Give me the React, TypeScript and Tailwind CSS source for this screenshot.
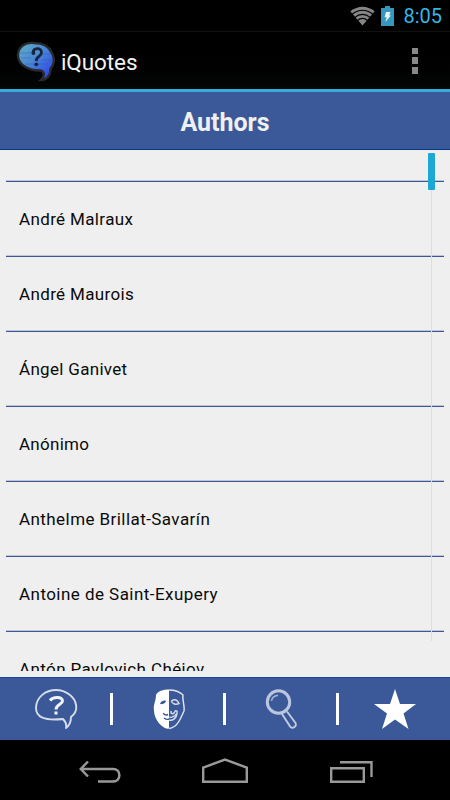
const authors = [
  { name: "André Malraux", tracking: "tracking-[0.36px]" },
  { name: "André Maurois", tracking: "tracking-[0.36px]" },
  { name: "Ángel Ganivet", tracking: "tracking-[0.31px]" },
  { name: "Anónimo", tracking: "tracking-[0.27px]" },
  { name: "Anthelme Brillat-Savarín", tracking: "tracking-[0.43px]" },
  { name: "Antoine de Saint-Exupery", tracking: "tracking-[0.45px]" },
  { name: "Antón Pavlovich Chéjov", tracking: "tracking-[0.39px]" },
];

const StatusBar = () => (
  <div className="flex h-[31px] w-full items-center justify-end bg-black pr-2">
    <svg className="mr-[6px] h-[20px] w-[25px]" viewBox="0 0 25 20">
      <path d="M0.3 5.3Q12.5-3.8 24.7 5.3L12.5 19.6Z" fill="#858585" />
      <g fill="none" stroke="#000" strokeWidth="1.2">
        <path d="M2 8.3Q12.5 0.2 23 8.3" />
        <path d="M4.5 11.6Q12.5 5 20.5 11.6" />
        <path d="M7.3 14.6Q12.5 10.2 17.7 14.6" />
      </g>
    </svg>
    <svg className="mr-[9px] h-[20px] w-[13px]" viewBox="0 0 13 20">
      <path d="M0 2H4V0H9V2H13V20H0Z" fill="#3597bd" />
      <path d="M5 6H9.5L8.2 9.5H10L4.3 16L5.7 11.2H3.6Z" fill="#e8f6fc" />
    </svg>
    <p className="pt-[2px] text-[20px] leading-[29px] text-[#33b5e5]">8:05</p>
  </div>
);

const ActionBar = () => (
  <div className="flex h-[58px] w-full items-center border-t border-[#111] bg-gradient-to-b from-black to-[#040605] pl-4 pr-8">
    <svg className="mr-[6px] mt-[2px] h-[42px] w-[39px]" viewBox="0 0 39 42">
      <defs>
        <linearGradient id="bubble" x1="0" y1="0" x2="0.9" y2="1">
          <stop offset="0" stopColor="#60b1c6" />
          <stop offset="0.45" stopColor="#4b88d2" />
          <stop offset="0.8" stopColor="#3658e4" />
          <stop offset="1" stopColor="#2440d0" />
        </linearGradient>
      </defs>
      <path
        d="M18 2C8 1 1.6 7 2 15C2.4 24 13 30 25 29.5C29 31 28.5 36 25 39C31 39 35 34 34.5 28C38 24 39 18 36 12C33 5 26 2 18 2Z"
        fill="url(#bubble)"
        stroke="#292a2c"
        strokeWidth="2.4"
      />
      <g stroke="#24479f" strokeWidth="0.6" opacity="0.5">
        <path d="M4 12H15M5 17H15M24 13H35M26 19H35M9 23H32" />
      </g>
      <path
        d="M17 12C17.2 6.5 25.5 6 25.5 11.5C25.5 15.5 20 15.5 20.3 20"
        fill="none"
        stroke="#17263d"
        strokeWidth="2.8"
      />
      <circle cx="17.4" cy="12" r="1.9" fill="#17263d" />
      <circle cx="20.3" cy="23.3" r="1.9" fill="#17263d" />
    </svg>
    <p className="flex-1 pt-[4px] text-[22.5px] leading-none tracking-[-0.1px] text-[#f3f3f3]">iQuotes</p>
    <div className="flex flex-col gap-[3px] pt-px">
      <div className="h-[6px] w-[6px] bg-[#888]" />
      <div className="h-[7px] w-[6px] bg-[#888]" />
      <div className="h-[7px] w-[6px] bg-[#888]" />
    </div>
  </div>
);

const AuthorList = () => (
  <div className="relative h-[527px] w-full bg-[#efefef]">
    <div className="h-[521px] overflow-hidden pl-[6px] pr-[6px]">
      <div className="h-[30px]" />
      {authors.map((author) => (
        <div
          key={author.name}
          className="h-[75px] border-t border-[#c0c4d2]"
        >
          <div className="flex h-[74px] items-center border-t border-[#3b5998] pl-[13px]">
            <p className={`text-[17px] leading-[20px] text-[#0a0a0a] ${author.tracking}`}>
              {author.name}
            </p>
          </div>
        </div>
      ))}
    </div>
    {/* scroll track and thumb */}
    <div className="absolute right-[18px] top-[3px] h-[488px] w-px bg-[#dedede]" />
    <div className="absolute right-[15px] top-[3px] h-[37px] w-[7px] rounded-[1px] bg-[#1ca8d5]" />
  </div>
);

const TabBar = () => (
  <div className="flex h-[63px] w-full items-center border-t border-[#16459b] bg-[#3b5998]">
    <div className="flex w-[110px] justify-end pr-[32px]">
      <svg className="h-[42px] w-[44px]" viewBox="0 0 44 42" fill="none">
        <path
          d="M22 2C12 2 2 9 2 20C2 29 10 33 29 31C31 33 33 36 32 40C36 37 37 33 37 29C41 26 43 22 42 17C41 9 32 2 22 2Z"
          stroke="#d5dced"
          strokeWidth="1.9"
          strokeLinejoin="round"
        />
        <path
          d="M16 12.5C19 8.5 29 8.5 28.5 13C28.5 16.5 22 16 22 21.5M22 23.5V26.5"
          stroke="#f0f3fa"
          strokeWidth="3"
        />
      </svg>
    </div>
    <div className="h-[32px] w-[3px] bg-white" />
    <div className="flex w-[110px] justify-center pl-px">
      <svg className="h-[42px] w-[34px]" viewBox="0 0 34 42" fill="none">
        <path
          d="M17 1.5C11 1.5 6 3 4 7C4 13 1 17 2 22C2 28 5 34 10 38C12 40 15 41 17 40.5Z"
          fill="#fff"
        />
        <path
          d="M17 2C23 2 28 4 31 7C30 12 33 18 32 23C29 29 28 34 23 38C20 40 18 40.5 17 40.5"
          stroke="#e0e5f1"
          strokeWidth="1.4"
        />
        <path d="M8 16C9 12.5 13 12 14 13C13 16 10 16.5 8 16Z" fill="#3b5998" />
        <path
          d="M19.5 13C23 10.5 25.5 12 27 15.5C24 17 20 16 19.5 13ZM19 23C18.5 27 22 26 23 23.5C23.5 22 26 23 25 25C24.5 31 20 33 17 32"
          stroke="#d6ddec"
          strokeWidth="1.5"
        />
        <path
          d="M12 30C14 31.5 16 31.5 17 31M16 26.5C14 27.5 12 27 11.5 25"
          stroke="#3b5998"
          strokeWidth="1.4"
        />
        <path d="M17 29C20 30 23 28 24 26" stroke="#d6ddec" strokeWidth="1.2" />
      </svg>
    </div>
    <div className="h-[32px] w-[3px] bg-white" />
    <div className="flex w-[110px] justify-center">
      <svg className="h-[40px] w-[34px]" viewBox="0 0 34 40" fill="none">
        <circle cx="14.5" cy="13" r="11.2" stroke="#bcc7df" strokeWidth="3" />
        <path d="M7.5 12C7.8 9 10 6.8 14 6.2" stroke="#a7b5d4" strokeWidth="1.4" />
        <path
          d="M18 25L26.5 38C29 40 33 37.5 31.5 34L23 22.5"
          stroke="#c1cbe1"
          strokeWidth="1.9"
        />
      </svg>
    </div>
    <div className="h-[32px] w-[3px] bg-white" />
    <div className="flex flex-1 justify-center">
      <svg className="h-[40px] w-[42px]" viewBox="0 0 42 40">
        <path
          d="M21 0L26 15H42L29.5 24.5L34.5 40L21 30.5L8 40L13 24.5L0 15H16Z"
          fill="#fff"
        />
      </svg>
    </div>
  </div>
);

const NavigationBar = () => (
  <div className="flex h-[60px] w-full items-start bg-black pl-[79px] pt-[18px]">
    <svg className="h-[26px] w-[42px]" viewBox="0 0 42 26" fill="none" stroke="#999" strokeWidth="2.5">
      <path d="M9 3.5L1.8 11L9 18.5M1.5 11H34C42.5 11 42.5 23.5 34 23.5H19" />
    </svg>
    <svg className="ml-[80px] h-[26px] w-[48px]" viewBox="0 0 48 26" fill="none" stroke="#999" strokeWidth="2.4">
      <path d="M2.2 23.8V9.5L24 1.6L45.8 9.5V23.8Z" />
    </svg>
    <svg className="ml-[80px] h-[26px] w-[45px]" viewBox="0 0 45 26" fill="none" stroke="#999" strokeWidth="2.4">
      <path d="M2.2 10.2H34.8V23.8H2.2ZM11 4.2H42.5V19" />
    </svg>
  </div>
);

const App = () => {
  return (
    <div className="flex h-[800px] w-[450px] flex-col overflow-hidden bg-black font-['Roboto',sans-serif]">
      <StatusBar />
      <ActionBar />
      <div className="flex h-[61px] w-full items-center justify-center border-b border-t-[3px] border-b-[#073985] border-t-[#35aedb] bg-[#3b5998] pt-[4px]">
        <h1 className="text-[25px] font-bold leading-none text-[#f0f0f0]">
          Authors
        </h1>
      </div>
      <AuthorList />
      <TabBar />
      <NavigationBar />
    </div>
  );
};

export default App;
